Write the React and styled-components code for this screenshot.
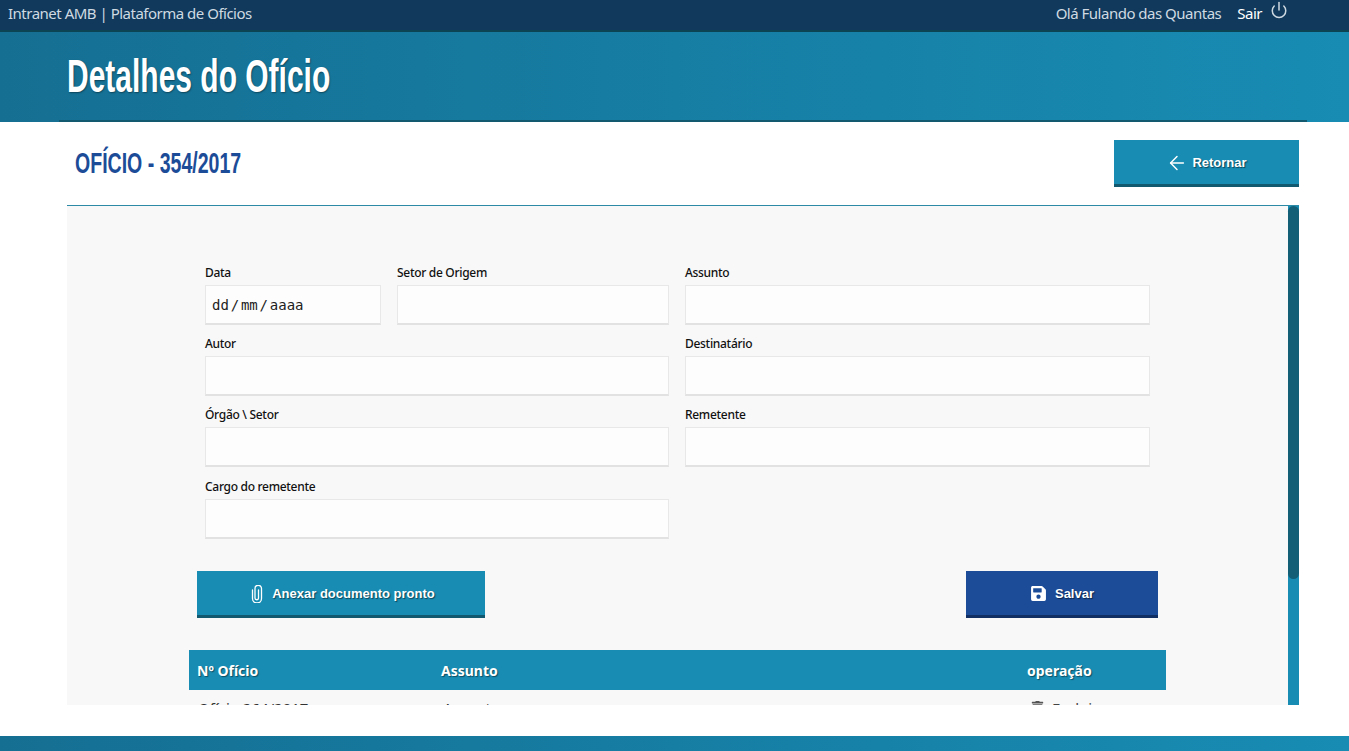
import React from 'react';
import styled, { createGlobalStyle } from 'styled-components';
import { ArrowLeft, Power } from 'lucide-react';
import { FaSave, FaTrash } from 'react-icons/fa';

const GlobalStyle = createGlobalStyle`
  html, body {
    margin: 0;
    padding: 0;
    height: 100%;
    overflow: hidden;
    background: #fff;
    font-family: "Noto Sans", "Liberation Sans", sans-serif;
  }
  * { box-sizing: border-box; }
`;

const Page = styled.div`
  height: 751px;
  display: flex;
  flex-direction: column;
  > * { flex-shrink: 0; }
`;

const TopBar = styled.div`
  height: 32px;
  padding: 0 61px 4px 8px;
  display: flex;
  align-items: center;
  justify-content: space-between;
  background: #10395b;
  border-bottom: 2px solid #0d4453;
  color: #cfd9e2;
  font-size: 15px;
  letter-spacing: -0.5px;
`;

const UserArea = styled.div`
  display: flex;
  align-items: center;
`;

const Logout = styled.span`
  margin-left: 16px;
  color: #fff;
  display: flex;
  gap: 8px;
  svg { margin-top: -2px; color: #cfd9e2; }
`;

const Banner = styled.div`
  height: 90px;
  padding-left: 59px;
  padding-right: 42px;
  background: linear-gradient(to right, #156f93, #188cb3);
`;

const BannerInner = styled.div`
  height: 90px;
  padding: 16px 0 0 8px;
  border-bottom: 2px solid #12596f;
`;

/* the page uses a condensed display face, none is installed so squeeze a bold one */
const BannerTitle = styled.h1`
  margin: 0;
  color: #fff;
  font-family: "Liberation Sans", sans-serif;
  font-size: 47px;
  line-height: 56px;
  font-weight: 700;
  white-space: nowrap;
  transform: scaleX(0.638);
  transform-origin: left center;
  text-shadow: 1px 1px 2px rgba(0, 0, 0, 0.4);
`;

const Container = styled.div`
  margin: 0 50px 0 67px;
`;

const TitleRow = styled.div`
  height: 83px;
  padding-top: 18px;
  display: flex;
  justify-content: space-between;
  align-items: flex-start;
`;

const DocTitle = styled.h2`
  margin: 5px 0 0 8px;
  color: #1c4c97;
  font-family: "Liberation Sans", sans-serif;
  font-size: 29px;
  line-height: 36px;
  font-weight: 700;
  white-space: nowrap;
  transform: scaleX(0.674);
  transform-origin: left center;
`;

const ActionButton = styled.button`
  width: ${p => p.$width}px;
  height: 47px;
  display: flex;
  align-items: center;
  justify-content: center;
  gap: ${p => p.$gap}px;
  border: 0;
  border-bottom: 3px solid ${p => (p.$dark ? '#122f63' : '#12596f')};
  background: ${p => (p.$dark ? '#1c4c97' : '#188cb3')};
  color: #fff;
  font-family: "Liberation Sans", sans-serif;
  font-size: 13px;
  font-weight: 700;
  text-shadow: 1px 1px 1px rgba(0, 0, 0, 0.5);
  padding: 1px 0 0 ${p => p.$shift || 0}px;
`;

const Panel = styled.div`
  position: relative;
  height: 500px;
  overflow: hidden;
  background: #f8f8f8;
  border-top: 1px solid #2d8aa6;
`;

const Scrollbar = styled.div`
  position: absolute;
  top: 0;
  right: 0;
  bottom: 0;
  width: 11px;
  background: #188cb3;
`;

const ScrollThumb = styled.div`
  height: 373px;
  background: #125f76;
  border-radius: 6px;
`;

const Form = styled.div`
  padding: 57px 0 0 138px;
  width: 1083px;
  display: grid;
  grid-template-columns: 176px 272px 465px;
  column-gap: 16px;
`;

const Field = styled.div`
  grid-column: ${p => p.$column};
  margin-bottom: ${p => p.$gap || 9}px;
`;

const Label = styled.label`
  display: block;
  height: 22px;
  color: #111;
  font-size: 12px;
  font-weight: 500;
  line-height: 19px;
  letter-spacing: -0.3px;
`;

const Input = styled.div`
  height: 40px;
  padding-left: 6px;
  display: flex;
  align-items: center;
  background: #fdfdfd;
  border: 1px solid #e8e8e8;
  border-bottom: 2px solid #e2e2e2;
  color: #222;
  font-family: "DejaVu Sans Mono", monospace;
  font-size: 14px;
`;

const DateSlash = styled.span`
  margin: 0 1.8px;
`;

const Buttons = styled.div`
  width: 961px;
  margin: 23px 0 0 130px;
  display: flex;
  justify-content: space-between;
`;

const Table = styled.table`
  width: 977px;
  margin: 32px 0 0 122px;
  border-collapse: collapse;
  font-size: 14px;
`;

const HeadCell = styled.th`
  height: 40px;
  padding: 0 0 0 8px;
  background: #188cb3;
  color: #fff;
  font-weight: 700;
  text-align: left;
  text-shadow: 1px 1px 1px rgba(0, 0, 0, 0.45);
`;

const Cell = styled.td`
  padding: 8px 0 0 ${p => p.$pad || 9}px;
  vertical-align: top;
  color: #333;
  font-size: 15px;
  line-height: 20px;
`;

const DeleteLink = styled.span`
  display: inline-flex;
  align-items: flex-start;
  gap: 8px;
  color: #444;
  svg { margin-top: 3px; color: #555; }
`;

const Footer = styled.div`
  height: 15px;
  margin-top: 31px;
  background: linear-gradient(to right, #156f93, #188cb3);
`;

const ClipIcon = () => (
  <svg width="12" height="18" viewBox="0 0 12 18" fill="none" stroke="currentColor" strokeWidth="1.3" strokeLinecap="round">
    <path d="M7.5 5V13A1.75 1.75 0 0 1 4 13V3.5A3.25 3.25 0 0 1 10.5 3.5V13.5A4.5 4.5 0 0 1 1.5 13.5V5" />
  </svg>
);

export default function App() {
  return (
    <Page>
      <GlobalStyle />
      <TopBar>
        <span>Intranet AMB | Plataforma de Ofícios</span>
        <UserArea>
          <span>Olá Fulando das Quantas</span>
          <Logout>Sair <Power size={18} strokeWidth={2} /></Logout>
        </UserArea>
      </TopBar>
      <Banner>
        <BannerInner>
          <BannerTitle>Detalhes do Ofício</BannerTitle>
        </BannerInner>
      </Banner>
      <Container>
        <TitleRow>
          <DocTitle>OFÍCIO - 354/2017</DocTitle>
          <ActionButton $width={185} $gap={4}><ArrowLeft size={22} strokeWidth={1.6} /> Retornar</ActionButton>
        </TitleRow>
        <Panel>
          <Scrollbar><ScrollThumb /></Scrollbar>
          <Form>
            <Field $column="1"><Label>Data</Label><Input>dd<DateSlash>/</DateSlash>mm<DateSlash>/</DateSlash>aaaa</Input></Field>
            <Field $column="2"><Label>Setor de Origem</Label><Input /></Field>
            <Field $column="3"><Label>Assunto</Label><Input /></Field>
            <Field $column="1 / 3"><Label>Autor</Label><Input /></Field>
            <Field $column="3"><Label>Destinatário</Label><Input /></Field>
            <Field $column="1 / 3" $gap={10}><Label>Órgão \ Setor</Label><Input /></Field>
            <Field $column="3"><Label>Remetente</Label><Input /></Field>
            <Field $column="1 / 3"><Label>Cargo do remetente</Label><Input /></Field>
          </Form>
          <Buttons>
            <ActionButton $width={288} $gap={9} $shift={4}><ClipIcon /> Anexar documento pronto</ActionButton>
            <ActionButton $width={192} $gap={8} $dark><FaSave size={17} /> Salvar</ActionButton>
          </Buttons>
          <Table>
            <thead>
              <tr>
                <HeadCell style={{ width: 244 }}>Nº Ofício</HeadCell>
                <HeadCell style={{ width: 586 }}>Assunto</HeadCell>
                <HeadCell>operação</HeadCell>
              </tr>
            </thead>
            <tbody>
              <tr>
                <Cell>Ofício 264/2017</Cell>
                <Cell $pad={10}>Assunto</Cell>
                <Cell $pad={12}><DeleteLink><FaTrash size={13} /> Excluir</DeleteLink></Cell>
              </tr>
            </tbody>
          </Table>
        </Panel>
      </Container>
      <Footer />
    </Page>
  );
}
